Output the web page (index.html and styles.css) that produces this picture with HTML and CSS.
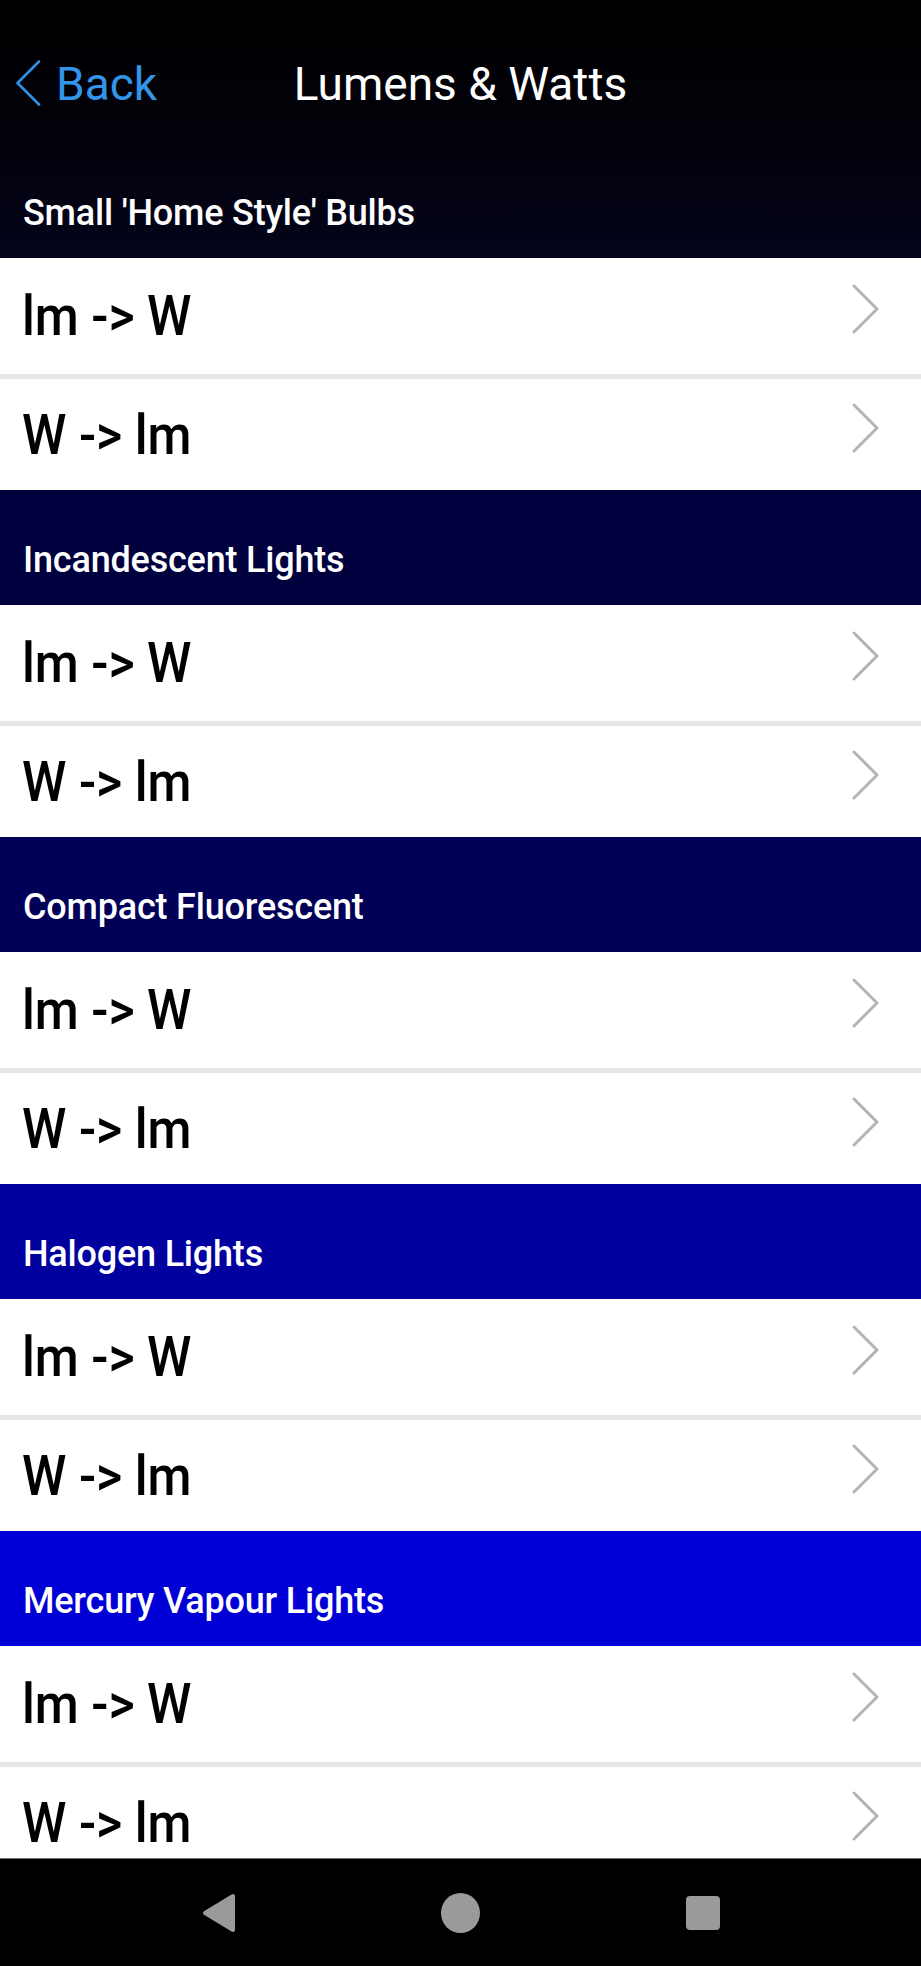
FILE: index.html
```html
<!DOCTYPE html>
<html lang="en">
<head>
  <meta charset="UTF-8">
  <title>Lumens &amp; Watts</title>
  <meta name="viewport" content="width=device-width, initial-scale=1.0">
  <link rel="stylesheet" href="styles.css">
</head>
<body>
  <div class="screen">
    <!-- Верхняя панель -->
    <header class="navbar">
      <a class="back" href="#">
        <svg class="back-chevron" width="26" height="46" viewBox="0 0 26 46">
          <polyline points="24,1.5 2.5,23 24,44.5" fill="none" stroke="#2f8fe4" stroke-width="2.6" stroke-linecap="round" stroke-linejoin="round"/>
        </svg>
        <span>Back</span>
      </a>
      <h1 class="title">Lumens &amp; Watts</h1>
      <span></span>
    </header>

    <main class="list">
      <section class="group">
        <h2 class="group-head head-1">Small 'Home Style' Bulbs</h2>
        <a class="row" href="#"><span>lm -&gt; W</span><i class="chev"></i></a>
        <a class="row" href="#"><span>W -&gt; lm</span><i class="chev"></i></a>
      </section>
      <section class="group">
        <h2 class="group-head head-2">Incandescent Lights</h2>
        <a class="row" href="#"><span>lm -&gt; W</span><i class="chev"></i></a>
        <a class="row" href="#"><span>W -&gt; lm</span><i class="chev"></i></a>
      </section>
      <section class="group">
        <h2 class="group-head head-3">Compact Fluorescent</h2>
        <a class="row" href="#"><span>lm -&gt; W</span><i class="chev"></i></a>
        <a class="row" href="#"><span>W -&gt; lm</span><i class="chev"></i></a>
      </section>
      <section class="group">
        <h2 class="group-head head-4">Halogen Lights</h2>
        <a class="row" href="#"><span>lm -&gt; W</span><i class="chev"></i></a>
        <a class="row" href="#"><span>W -&gt; lm</span><i class="chev"></i></a>
      </section>
      <section class="group">
        <h2 class="group-head head-5">Mercury Vapour Lights</h2>
        <a class="row" href="#"><span>lm -&gt; W</span><i class="chev"></i></a>
        <a class="row" href="#"><span>W -&gt; lm</span><i class="chev"></i></a>
      </section>
    </main>

    <!-- Системные кнопки -->
    <footer class="sysbar">
      <span class="sys-btn">
        <svg width="36" height="40" viewBox="0 0 36 40">
          <path d="M32 3 L4 20 L32 37 Z" fill="#9a9a9a" stroke="#9a9a9a" stroke-width="4" stroke-linejoin="round"/>
        </svg>
      </span>
      <span class="sys-btn"><i class="sys-home"></i></span>
      <span class="sys-btn"><i class="sys-recent"></i></span>
    </footer>
  </div>
</body>
</html>
```

FILE: styles.css
```css
html, body {
  margin: 0;
  padding: 0;
  background: #000;
}
body {
  font-family: "Roboto", "Noto Sans", sans-serif;
  width: 921px;
  height: 1966px;
  overflow: hidden;
}
.screen {
  display: flex;
  flex-direction: column;
  height: 1966px;
  background: #fff;
}
/* Навигация */
.navbar {
  height: 143px;
  box-sizing: border-box;
  padding: 62px 0 0 0;
  display: grid;
  grid-template-columns: 1fr auto 1fr;
  align-items: start;
  background: linear-gradient(#000 0%, #01010a 100%);
}
.back {
  display: flex;
  align-items: center;
  gap: 15px;
  margin-left: 15px;
  color: #3394e8;
  text-decoration: none;
  font-size: 46px;
  line-height: 44px;
}
.back-chevron {
  margin-top: -3px;
}
.title {
  margin: 0;
  color: #fff;
  font-size: 46px;
  line-height: 44px;
  font-weight: 400;
}
/* Список */
.list {
  flex: 1;
  overflow: hidden;
  display: flex;
  flex-direction: column;
}
.group {
  display: flex;
  flex-direction: column;
  flex-shrink: 0;
}
.group-head {
  margin: 0;
  height: 115px;
  box-sizing: border-box;
  display: flex;
  align-items: flex-end;
  padding: 0 0 25px 23px;
  color: #fff;
  font-size: 36px;
  line-height: 40px;
  font-weight: 500;
  letter-spacing: -0.2px;
}
.head-1 { background: linear-gradient(#01010a, #04041c); }
.head-2 { background: #00003e; }
.head-3 { background: #000056; }
.head-4 { background: #00009f; }
.head-5 { background: #0000d6; }
.row {
  height: 116px;
  box-sizing: border-box;
  display: flex;
  align-items: center;
  justify-content: space-between;
  padding: 0 42px 0 22px;
  color: #000;
  text-decoration: none;
  font-size: 56px;
  line-height: 56px;
  font-weight: 500;
  background: #fff;
}
/* текст в строках заметно уже обычного Roboto */
.row span {
  transform: scaleX(0.9);
  transform-origin: left center;
}
.row + .row {
  border-top: 5px solid #e6e6e6;
}
.chev {
  width: 27px;
  height: 50px;
  margin-bottom: 14px;
  background: no-repeat center / 27px 50px url("data:image/svg+xml;utf8,<svg xmlns='http://www.w3.org/2000/svg' width='27' height='50' viewBox='0 0 27 50'><polyline points='2,2 25,25 2,48' fill='none' stroke='%23b4b4b4' stroke-width='3' stroke-linecap='round' stroke-linejoin='round'/></svg>");
}
/* Нижняя панель */
.sysbar {
  height: 108px;
  flex-shrink: 0;
  box-sizing: border-box;
  border-top: 1px solid #6f6f6f;
  background: #000;
  display: flex;
  justify-content: center;
  align-items: center;
}
.sys-btn {
  width: 242px;
  display: flex;
  justify-content: center;
  align-items: center;
}
.sys-home {
  width: 39px;
  height: 40px;
  border-radius: 50%;
  background: #9a9a9a;
}
.sys-recent {
  width: 34px;
  height: 34px;
  border-radius: 4px;
  background: #9a9a9a;
}
```
